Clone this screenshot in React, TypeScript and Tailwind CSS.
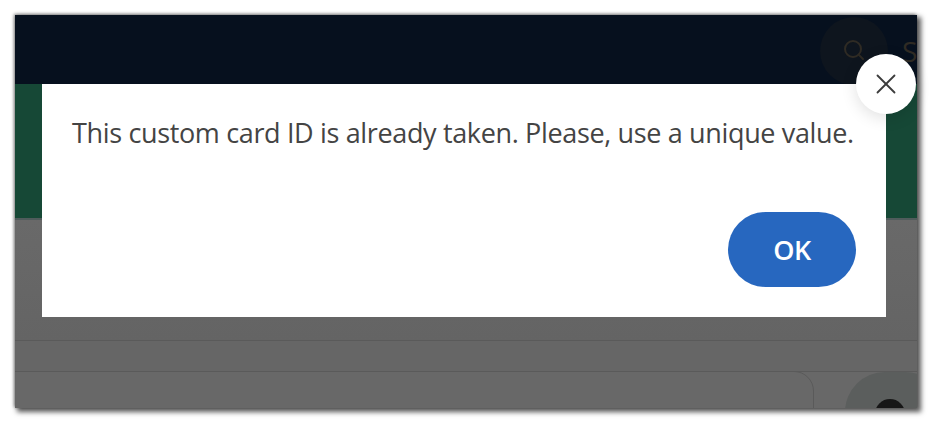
import { Search, X } from "lucide-react";

export default function App() {
  return (
    <div className="w-[944px] h-[435px] bg-white pl-[15px] pt-[15px] font-['Open_Sans',sans-serif] overflow-hidden">
      <div className="relative w-[902px] h-[393px] flex flex-col shadow-[3px_3px_5px_1px_rgba(0,0,0,0.65),-1px_-1px_3px_rgba(0,0,0,0.45)] bg-[#6a6a6a]">
        <div className="relative h-[69px] shrink-0 bg-[#06101e] overflow-hidden">
          <div className="absolute left-[805px] top-[2px] w-[68px] h-[68px] rounded-full bg-[#0e151e]">
            <Search size={24} strokeWidth={2} className="absolute left-[22px] top-[21px] text-[#2f2b24]" />
          </div>
          <span className="absolute left-[887px] top-[17px] text-[28px] leading-[38px] text-[#2f2b24]">S</span>
        </div>
        <div className="h-[136px] shrink-0 bg-[#164836] border-b-2 border-[#505c5c]" />
        <div className="flex-1 flex flex-col overflow-hidden">
          <div className="h-[121px] shrink-0 bg-gradient-to-b from-[#696969] to-[#646464] border-b border-[#5a5a5a]" />
          <div className="h-[31px] shrink-0 border-b border-[#5a5a5a] bg-[#666666]" />
          <div className="flex-1 relative bg-[#686868] overflow-hidden">
            <div className="absolute left-[-20px] top-[-1px] w-[819px] h-[60px] rounded-[20px] border border-[#5a5a5a]" />
            <div className="absolute left-[830px] top-0 w-[100px] h-[100px] rounded-[40px] bg-[#5b5e5d]">
              <div className="absolute left-[30px] top-[27px] w-[30px] h-[30px] rounded-full bg-[#171717]" />
            </div>
          </div>
        </div>

        <div className="absolute left-[27px] top-[69px] w-[844px] h-[233px] bg-white flex flex-col">
          <p className="pl-[30px] pt-[30px] text-[27px] tracking-[-0.35px] leading-[38px] text-[#444444] whitespace-nowrap">
            This custom card ID is already taken. Please, use a unique value.
          </p>
          <div className="mt-auto flex justify-end pr-[30px] pb-[30px]">
            <button className="w-[128px] h-[75px] rounded-full bg-[#2767bf] text-white text-[27px] tracking-[-0.4px] leading-[70px] font-semibold">
              OK
            </button>
          </div>
        </div>
        <button className="absolute left-[841px] top-[39px] w-[60px] h-[60px] rounded-full bg-white flex items-center justify-center shadow-[0_4px_16px_rgba(0,0,0,0.12)]">
          <X size={34} strokeWidth={1.3} className="text-[#3c3c3c]" />
        </button>
      </div>
    </div>
  );
}
